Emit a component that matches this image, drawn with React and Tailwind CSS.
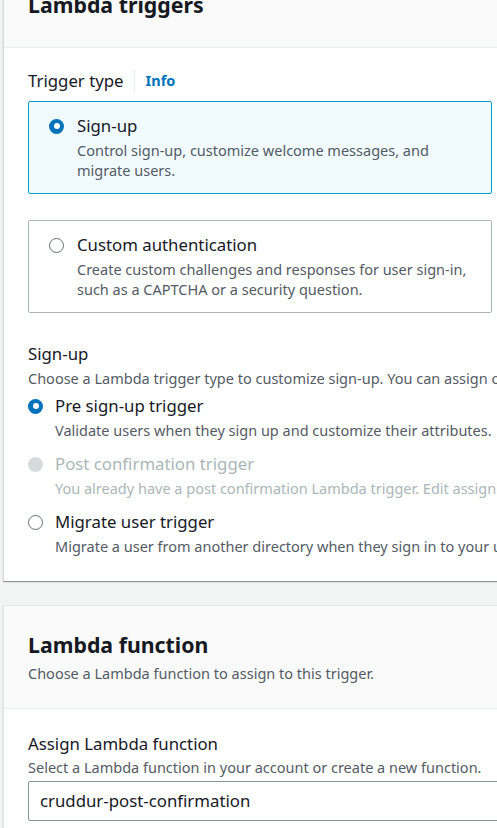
import React, { useState } from 'react';

const font = { fontFamily: '"Noto Sans", "Open Sans", Arial, sans-serif' };

const RadioDot = ({ state }) => {
  if (state === 'checked') {
    return (
      <span className="w-[15px] h-[15px] rounded-full bg-[#0073bb] flex items-center justify-center shrink-0">
        <span className="w-[6px] h-[6px] rounded-full bg-white" />
      </span>
    );
  }
  if (state === 'disabled') {
    return <span className="w-[15px] h-[15px] rounded-full bg-[#d5dbdb] shrink-0" />;
  }
  return <span className="w-[15px] h-[15px] rounded-full border-[1.5px] border-[#687078] bg-white shrink-0" />;
};

const TriggerTile = ({ selected, title, description, onClick }) => (
  <div
    onClick={onClick}
    className={`w-[464px] border rounded-[2px] pl-[20px] pr-[20px] pt-[12px] pb-[13px] cursor-pointer ${
      selected ? 'border-[#00a1c9] bg-[#f1faff]' : 'border-[#aab7b8] bg-white'
    }`}
  >
    <div className="flex items-center h-[24px]">
      <RadioDot state={selected ? 'checked' : 'unchecked'} />
      <span className="ml-[13px] text-[16.8px] leading-[24px] text-[#16191f]">{title}</span>
    </div>
    <p className="ml-[28px] mt-[2px] text-[14.5px] leading-[20px] text-[#545b64]">{description}</p>
  </div>
);

const RadioRow = ({ state, title, description, onClick }) => {
  const disabled = state === 'disabled';
  return (
    <div onClick={disabled ? undefined : onClick} className={disabled ? '' : 'cursor-pointer'}>
      <div className="flex items-center h-[24px]">
        <RadioDot state={state} />
        <span className={`ml-[12px] text-[16.8px] leading-[24px] whitespace-nowrap ${disabled ? 'text-[#aab7b8]' : 'text-[#16191f]'}`}>
          {title}
        </span>
      </div>
      <p className={`ml-[27px] mt-[2px] text-[14.5px] leading-[20px] whitespace-nowrap ${disabled ? 'text-[#aab7b8]' : 'text-[#545b64]'}`}>
        {description}
      </p>
    </div>
  );
};

export default function App() {
  const [triggerType, setTriggerType] = useState('signup');
  const [signupTrigger, setSignupTrigger] = useState('pre');

  return (
    <div style={font} className="w-[497px] h-[828px] overflow-hidden bg-[#f2f3f3] pl-[3px]">
      {/* Lambda triggers card */}
      <section className="w-[900px] bg-white border-l border-[#d5dbdb] shadow-[0_1px_1px_0_rgba(0,28,36,0.3),1px_1px_1px_0_rgba(0,28,36,0.15)]">
        <header className="bg-[#fafafa] border-b border-[#eaeded] px-6 pb-[28px]">
          <h2 className="mt-[-9px] text-[21.3px] leading-[28px] font-bold text-[#16191f]">Lambda triggers</h2>
        </header>

        <div className="px-6 pt-[22px] pb-[25px]">
          <div className="flex items-center h-[22px]">
            <span className="text-[16.8px] leading-[22px] text-[#16191f]">Trigger type</span>
            <span className="mx-[10px] w-px h-[22px] bg-[#eaeded]" />
            <span className="ml-[1px] text-[14.5px] font-bold text-[#0073bb] cursor-pointer">Info</span>
          </div>

          <div className="mt-[9px] flex flex-col gap-[26px]">
            <TriggerTile
              selected={triggerType === 'signup'}
              onClick={() => setTriggerType('signup')}
              title="Sign-up"
              description="Control sign-up, customize welcome messages, and migrate users."
            />
            <TriggerTile
              selected={triggerType === 'custom'}
              onClick={() => setTriggerType('custom')}
              title="Custom authentication"
              description="Create custom challenges and responses for user sign-in, such as a CAPTCHA or a security question."
            />
          </div>

          <h3 className="mt-[30px] text-[16.8px] leading-[22px] text-[#16191f]">Sign-up</h3>
          <p className="mt-[3px] text-[14.5px] leading-[20px] text-[#545b64] whitespace-nowrap">
            Choose a Lambda trigger type to customize sign-up. You can assign only one trigger of each type.
          </p>

          <div className="mt-[6px] flex flex-col gap-[12px]">
            <RadioRow
              state={signupTrigger === 'pre' ? 'checked' : 'unchecked'}
              onClick={() => setSignupTrigger('pre')}
              title="Pre sign-up trigger"
              description="Validate users when they sign up and customize their attributes."
            />
            <RadioRow
              state="disabled"
              title="Post confirmation trigger"
              description="You already have a post confirmation Lambda trigger. Edit assignment to change it."
            />
            <RadioRow
              state={signupTrigger === 'migrate' ? 'checked' : 'unchecked'}
              onClick={() => setSignupTrigger('migrate')}
              title="Migrate user trigger"
              description="Migrate a user from another directory when they sign in to your user pool."
            />
          </div>
        </div>
      </section>

      {/* Lambda function card */}
      <section className="mt-[24px] w-[900px] bg-white border-l border-t border-[#e3e6e6] shadow-[0_1px_1px_0_rgba(0,28,36,0.3)]">
        <header className="bg-[#fafafa] border-b border-[#eaeded] px-6 pt-[25px] pb-[25px]">
          <h2 className="text-[21.3px] leading-[28px] font-bold text-[#16191f]">Lambda function</h2>
          <p className="mt-[4px] text-[14.5px] leading-[20px] text-[#545b64]">Choose a Lambda function to assign to this trigger.</p>
        </header>

        <div className="px-6 pt-[24px] pb-6">
          <label className="block text-[16.8px] leading-[22px] text-[#16191f]">Assign Lambda function</label>
          <p className="mt-[2px] text-[14.5px] leading-[20px] text-[#545b64]">
            Select a Lambda function in your account or create a new function.
          </p>
          <div className="mt-[4px] w-[600px] h-[40px] border border-[#879596] rounded-[2px] flex items-center pl-[11px] text-[16.8px] text-[#16191f]">
            cruddur-post-confirmation
          </div>
        </div>
      </section>
    </div>
  );
}
